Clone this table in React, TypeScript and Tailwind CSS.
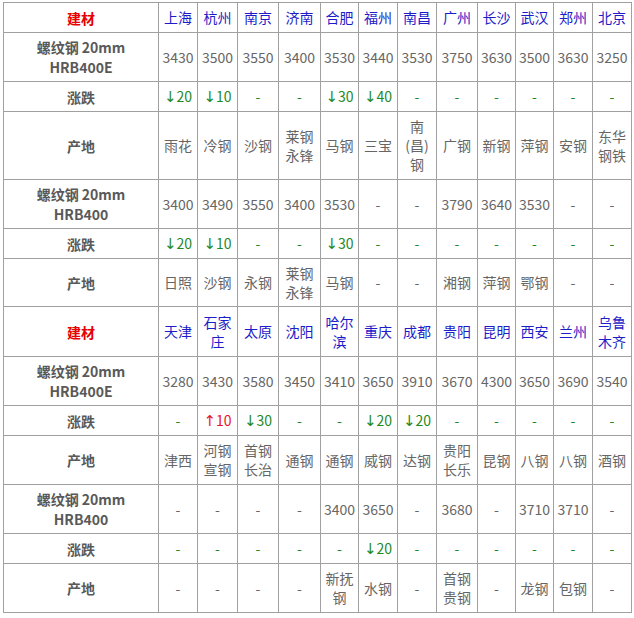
import React from "react";

type Row = { kind: "head" | "price" | "chg" | "orig"; label: string[]; cells: string[]; h: string };

const colClasses = [
  "w-[155px]", "w-[39px]", "w-[40px]", "w-[41px]", "w-[42px]", "w-[38px]", "w-[39px]",
  "w-[39px]", "w-[41px]", "w-[38px]", "w-[38px]", "w-[39px]", "w-[39px]",
];

const rows: Row[] = [
  { kind: "head", label: ["建材"], cells: ["上海", "杭州", "南京", "济南", "合肥", "福州", "南昌", "广州", "长沙", "武汉", "郑州", "北京"], h: "h-[30px]" },
  { kind: "price", label: ["螺纹钢 20mm", "HRB400E"], cells: ["3430", "3500", "3550", "3400", "3530", "3440", "3530", "3750", "3630", "3500", "3630", "3250"], h: "h-[49px]" },
  { kind: "chg", label: ["涨跌"], cells: ["↓20", "↓10", "-", "-", "↓30", "↓40", "-", "-", "-", "-", "-", "-"], h: "h-[30px]" },
  { kind: "orig", label: ["产地"], cells: ["雨花", "冷钢", "沙钢", "莱钢\n永锋", "马钢", "三宝", "南\n(昌)\n钢", "广钢", "新钢", "萍钢", "安钢", "东华\n钢铁"], h: "h-[68px]" },
  { kind: "price", label: ["螺纹钢 20mm", "HRB400"], cells: ["3400", "3490", "3550", "3400", "3530", "-", "-", "3790", "3640", "3530", "-", "-"], h: "h-[49px]" },
  { kind: "chg", label: ["涨跌"], cells: ["↓20", "↓10", "-", "-", "↓30", "-", "-", "-", "-", "-", "-", "-"], h: "h-[30px]" },
  { kind: "orig", label: ["产地"], cells: ["日照", "沙钢", "永钢", "莱钢\n永锋", "马钢", "-", "-", "湘钢", "萍钢", "鄂钢", "-", "-"], h: "h-[48px]" },
  { kind: "head", label: ["建材"], cells: ["天津", "石家\n庄", "太原", "沈阳", "哈尔\n滨", "重庆", "成都", "贵阳", "昆明", "西安", "兰州", "乌鲁\n木齐"], h: "h-[50px]" },
  { kind: "price", label: ["螺纹钢 20mm", "HRB400E"], cells: ["3280", "3430", "3580", "3450", "3410", "3650", "3910", "3670", "4300", "3650", "3690", "3540"], h: "h-[49px]" },
  { kind: "chg", label: ["涨跌"], cells: ["-", "↑10", "↓30", "-", "-", "↓20", "↓20", "-", "-", "-", "-", "-"], h: "h-[30px]" },
  { kind: "orig", label: ["产地"], cells: ["津西", "河钢\n宣钢", "首钢\n长治", "通钢", "通钢", "威钢", "达钢", "贵阳\n长乐", "昆钢", "八钢", "八钢", "酒钢"], h: "h-[49px]" },
  { kind: "price", label: ["螺纹钢 20mm", "HRB400"], cells: ["-", "-", "-", "-", "3400", "3650", "-", "3680", "-", "3710", "3710", "-"], h: "h-[49px]" },
  { kind: "chg", label: ["涨跌"], cells: ["-", "-", "-", "-", "-", "↓20", "-", "-", "-", "-", "-", "-"], h: "h-[30px]" },
  { kind: "orig", label: ["产地"], cells: ["-", "-", "-", "-", "新抚\n钢", "水钢", "-", "首钢\n贵钢", "-", "龙钢", "包钢", "-"], h: "h-[49px]" },
];

function cellColor(kind: Row["kind"], v: string) {
  if (kind === "head") return "text-[#1c1cc8]";
  if (kind === "chg") {
    if (v.startsWith("↑")) return "text-[#e8141e]";
    return "text-[#1f8a1f]";
  }
  return "text-[#666666]";
}

function Value({ v }: { v: string }) {
  if (v.startsWith("↓") || v.startsWith("↑")) {
    return (
      <div>
        <span className="font-['DejaVu_Sans',sans-serif] text-[15px]">{v[0]}</span>
        {v.slice(1)}
      </div>
    );
  }
  return (
    <>
      {v.split("\n").map((l, i) => (
        <div key={i}>{l}</div>
      ))}
    </>
  );
}

export default function App() {
  return (
    <div className="bg-white w-[634px] h-[618px] pt-[2px] pl-[3px] font-['Noto_Sans_CJK_SC','Noto_Sans',sans-serif]">
      <table className="table-fixed border-collapse border border-[#444444] w-[629px]">
        <colgroup>
          {colClasses.map((c, i) => (
            <col key={i} className={c} />
          ))}
        </colgroup>
        <tbody>
          {rows.map((r, ri) => (
            <tr key={ri} className={r.h}>
              <td
                className={
                  "border border-[#a0a0a0] text-center align-middle font-bold text-[14px] leading-[20px] p-0 " +
                  (r.kind === "head" ? "text-[#e60000]" : "text-[#595959]")
                }
              >
                {r.label.map((l, i) => (
                  <div key={i}>{l}</div>
                ))}
              </td>
              {r.cells.map((c, ci) => (
                <td
                  key={ci}
                  className={
                    "border border-[#a0a0a0] text-center align-middle text-[14px] leading-[19px] p-0 whitespace-nowrap " +
                    cellColor(r.kind, c)
                  }
                >
                  <Value v={c} />
                </td>
              ))}
            </tr>
          ))}
        </tbody>
      </table>
    </div>
  );
}
